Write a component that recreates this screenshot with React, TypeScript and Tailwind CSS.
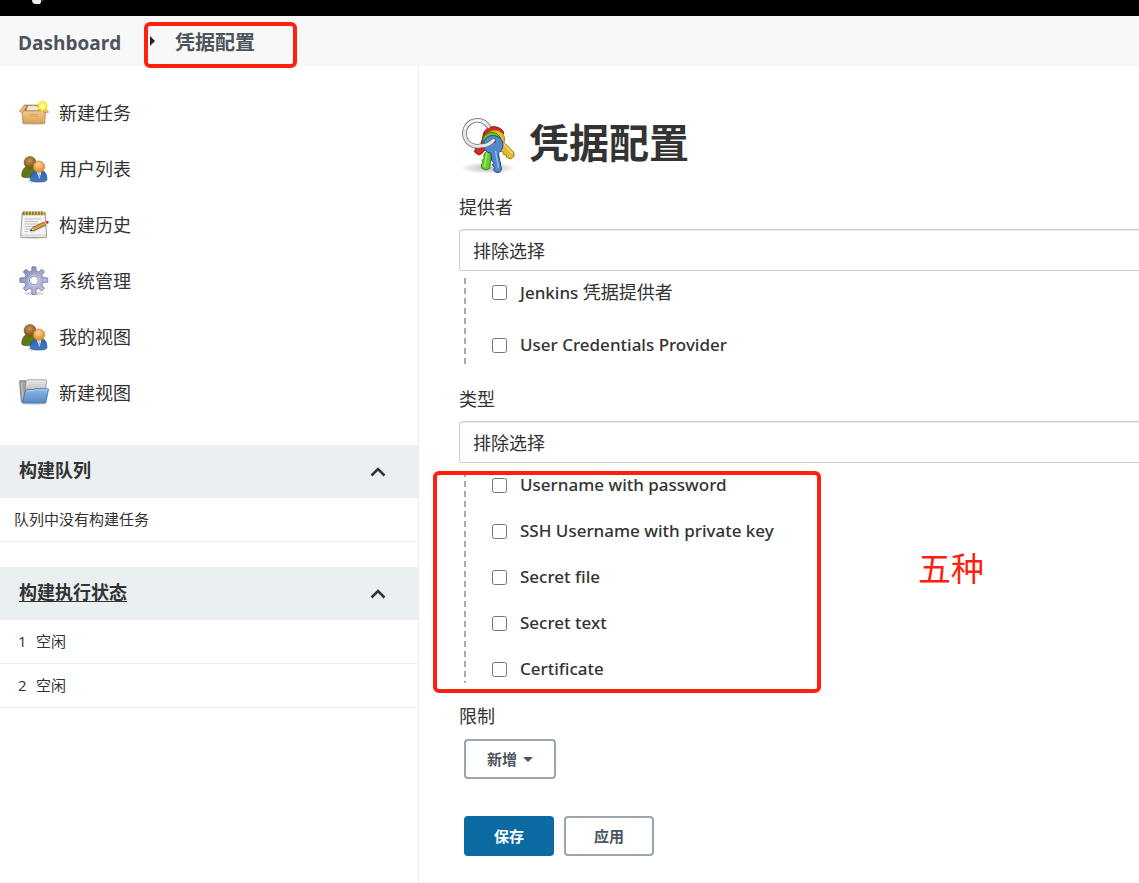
import type { ReactNode } from "react";

function BoxIcon() {
  return (
    <svg viewBox="0 0 30 30" className="size-[30px] shrink-0" aria-hidden="true">
      <defs>
        <linearGradient id="box-front" x1="0" y1="0" x2="0" y2="1">
          <stop offset="0" stopColor="#f0c78a" />
          <stop offset="1" stopColor="#d9a45c" />
        </linearGradient>
        <radialGradient id="box-star">
          <stop offset="0" stopColor="#fffde0" />
          <stop offset="0.4" stopColor="#fdf03c" />
          <stop offset="0.75" stopColor="#f7e31d" stopOpacity="0.8" />
          <stop offset="1" stopColor="#f7e31d" stopOpacity="0" />
        </radialGradient>
      </defs>
      <ellipse cx="14.8" cy="25.6" rx="12" ry="1.6" fill="#000" opacity="0.15" />
      <path d="M5.5 7H21l4.5 6.5H3z" fill="#a8793f" stroke="#b98545" strokeWidth="0.7" />
      <path d="M7.500 12.800l1-4.500q2-1.500 3.500-.3 2-1.400 4 0 2-.6 3 .6l1 4.200z" fill="#eceae6" stroke="#8f897f" strokeWidth="0.5" />
      <path d="M3 12.8h23.5l-.8 12.4H4z" fill="url(#box-front)" stroke="#b57f3c" strokeWidth="0.8" />
      <path d="M5.5 7L.4 13.2l3 1.6L8 8.4z" fill="#e9b974" stroke="#b98545" strokeWidth="0.7" />
      <path d="M22 8l3.3 7 4.3-.8L24.5 8z" fill="#e9b974" stroke="#b98545" strokeWidth="0.7" />
      <path d="M11 16.5h8M11 18.2h8" stroke="#c08d4a" strokeWidth="0.6" opacity="0.6" />
      <circle cx="23.3" cy="8" r="6" fill="url(#box-star)" />
      <path d="M23.3 3l1.2 3.2 3.6-.8-2 2.9 2.3 2.5-3.5-.1-1.4 3-1.3-3-3.6.4 2.3-2.7-2-2.8 3.3.6z" fill="#fff45a" />
      <circle cx="23.300" cy="8" r="1.800" fill="#fffef0" />
    </svg>
  );
}

function UsersIcon() {
  return (
    <svg viewBox="0 0 30 30" className="size-[30px] shrink-0" aria-hidden="true">
      <defs>
        <radialGradient id="head-back" cx="0.45" cy="0.35">
          <stop offset="0" stopColor="#c99a5a" />
          <stop offset="1" stopColor="#8a5d22" />
        </radialGradient>
        <radialGradient id="head-front" cx="0.45" cy="0.35">
          <stop offset="0" stopColor="#ffd79a" />
          <stop offset="1" stopColor="#e6973c" />
        </radialGradient>
        <linearGradient id="body-front" x1="0" y1="0" x2="0" y2="1">
          <stop offset="0" stopColor="#2b62ab" />
          <stop offset="1" stopColor="#3f7cc4" />
        </linearGradient>
      </defs>
      <ellipse cx="18" cy="27.3" rx="10" ry="1.6" fill="#000" opacity="0.15" />
      <path d="M2.700 21.500c0-5 2.500-8.600 6-9.200h5c3 .6 5 4 5 8l-2 3.200H5.500c-1.700 0-2.800-.7-2.800-2z" fill="#5d7a14" stroke="#3f540b" strokeWidth="0.6" />
      <circle cx="11" cy="8.400" r="5.900" fill="url(#head-back)" stroke="#73490f" strokeWidth="0.6" />
      <path d="M11.200 25.500c0-4.800 2.300-8.300 5.800-8.800h6c3.300.5 5 4 5 8.500 0 1.600-2 2.600-8.200 2.600s-8.600-.8-8.600-2.300z" fill="url(#body-front)" stroke="#1f4c8b" strokeWidth="0.6" />
      <path d="M17.600 17.500h4.800L20.500 25z" fill="#f4f6fa" />
      <path d="M19.500 18.500h1l.5 3.500-.7 2-.8-2z" fill="#9fb4d1" />
      <circle cx="20" cy="12.600" r="5.700" fill="url(#head-front)" stroke="#c47a22" strokeWidth="0.6" />
    </svg>
  );
}

function NotepadIcon() {
  return (
    <svg viewBox="0 0 30 30" className="size-[30px] shrink-0" aria-hidden="true">
      <ellipse cx="15" cy="27.400" rx="14" ry="1.500" fill="#000" opacity="0.15" />
      <path d="M3.200 3h23l1.300 23.300q0 1-1 1H2.700q-1 0-1-1z" fill="#f4f4f3" stroke="#8d8f8b" strokeWidth="0.9" />
      <path d="M2 25h25.500" stroke="#c4c5c2" strokeWidth="0.8" />
      <path d="M3.200 2h23.200l.2 3.200H3z" fill="#b4a24a" />
      <path d="M5 1v4M8 1v4M11 1v4M14 1v4M17 1v4M20 1v4M23 1v4" stroke="#6f6420" strokeWidth="1.100" />
      <path d="M6.200 1v4M9.200 1v4M12.200 1v4M15.200 1v4M18.200 1v4M21.200 1v4M24.200 1v4" stroke="#e0d483" strokeWidth="0.7" />
      <path d="M5.500 9H22M5.500 11.500H19M5.500 14H21M5.500 16.500H15M5.500 19H11M5.500 21.500H9" stroke="#b9bbb8" strokeWidth="0.9" />
      <path d="M12 22.300l15-7" stroke="#000" strokeWidth="1.600" opacity="0.150" />
      <path d="M11 20.800l3.300-3.700 11-5.100 1.500 3-11 5.100z" fill="#e2a03a" stroke="#70430c" strokeWidth="0.7" />
      <path d="M11 20.800l3.300-3.700 1.500 3z" fill="#f0d9ae" stroke="#70430c" strokeWidth="0.400" />
      <path d="M11 20.800l1.500-1.700.7 1.300z" fill="#222" />
      <path d="M25.300 12l1.500-.7 1.500 3-1.500.7z" fill="#c8cbd0" />
      <path d="M26.600 11.400l1.300-.6q1.200-.3 1.700.9.400 1.300-.4 1.700l-1.200.6z" fill="#d8282f" />
    </svg>
  );
}

function GearIcon() {
  return (
    <svg viewBox="0 0 30 30" className="size-[30px] shrink-0" aria-hidden="true">
      <defs>
        <linearGradient id="gear-fill" x1="0.1" y1="0" x2="0.9" y2="1">
          <stop offset="0" stopColor="#7388b2" />
          <stop offset="0.5" stopColor="#a9aed2" />
          <stop offset="1" stopColor="#c3bfdc" />
        </linearGradient>
      </defs>
      <ellipse cx="15" cy="27.500" rx="10" ry="1.800" fill="#000" opacity="0.15" />
      <path
        d="M12.700 4.900L13 .8h3.800l.4 4.100 2.400 1 3.200-2.700 2.700 2.700-2.700 3.200 1 2.400 4.900.5v4.200l-4.900.4-1 2.400 2.700 3.300-2.700 2.700-3.200-2.700-2.400 1-.4 5h-3.800l-.3-5-2.500-1L7 25l-2.700-2.700L7 19l-1-2.400-5.200-.4V12l5.200-.5 1-2.400-2.700-3.200L7 3.200l3.200 2.700zM15 10.100a4.400 4.400 0 1 0 0 8.800 4.400 4.400 0 0 0 0-8.800z"
        fill="url(#gear-fill)"
        fillRule="evenodd"
        stroke="#6d7596"
        strokeWidth="0.8"
        strokeLinejoin="round"
      />
      <circle cx="15" cy="14.500" r="5.500" fill="none" stroke="#dcdff0" strokeWidth="1" opacity="0.8" />
    </svg>
  );
}

function FolderIcon() {
  return (
    <svg viewBox="0 0 30 30" className="size-[30px] shrink-0" aria-hidden="true">
      <defs>
        <linearGradient id="folder-front" x1="0" y1="0" x2="0" y2="1">
          <stop offset="0" stopColor="#92bbe6" />
          <stop offset="1" stopColor="#5588c4" />
        </linearGradient>
        <linearGradient id="folder-paper" x1="0" y1="0" x2="0" y2="1">
          <stop offset="0" stopColor="#f2f2f2" />
          <stop offset="1" stopColor="#a9aaa8" />
        </linearGradient>
      </defs>
      <ellipse cx="15" cy="25.600" rx="13" ry="1.400" fill="#000" opacity="0.15" />
      <path d="M.6 3.500q0-.8.8-.8h5l1 2.300h18v19H3.400q-1 0-1.200-1z" fill="#a3a5a2" stroke="#6f716e" strokeWidth="0.8" />
      <path d="M2.500 5l1.800 17" stroke="#d0d1cf" strokeWidth="0.8" />
      <path d="M6.800 4.500l1.500-2.700h18.500q.8 0 .8.800L26 16H5.500z" fill="url(#folder-paper)" stroke="#7c7e7b" strokeWidth="0.7" />
      <path d="M10 4.500h14M9.500 6.500h14M9 8.500h10" stroke="#cfd0ce" strokeWidth="0.7" />
      <path d="M6.500 12.600q.3-.8 1.200-.9l7-.2 1-.8h13.200q.7 0 .6.800l-2.600 12.600q-.2.900-1.200.9H4.300q-1 0-.8-1z" fill="url(#folder-front)" stroke="#3b6ca8" strokeWidth="0.8" />
      <path d="M7.500 13l7.600-.4 1-.8h12.300" fill="none" stroke="#c4dbf4" strokeWidth="0.7" />
    </svg>
  );
}

function KeysIcon() {
  return (
    <svg viewBox="2 2 58 58" className="size-[58px] shrink-0" aria-hidden="true">
      <defs>
        <radialGradient id="keys-shadow">
          <stop offset="0" stopColor="#000" stopOpacity="0.28" />
          <stop offset="1" stopColor="#000" stopOpacity="0" />
        </radialGradient>
      </defs>
      <ellipse cx="31" cy="55" rx="28" ry="6" fill="url(#keys-shadow)" />
      {/* red */}
      <path d="M27 19c3-5 9-6.500 14-4.500 3 1.200 5 3 6 5.500L32 31l-7 9.500-3.300 1.500-4.200-3 1-3.500 2-.6.5-3 3-.8z" fill="#d92626" stroke="#8e1010" strokeWidth="1" />
      {/* yellow */}
      <path d="M30 21c4-4.500 10-5 14.500-1.500 3 2.800 3.500 6 2.500 10l9.500 9.500.8 4-3.500 3-4-1.500-.5-2.500-2.800-.4-.7-3-3-.6-3.800-4.200z" fill="#e3b935" stroke="#a17c0e" strokeWidth="1" />
      <path d="M45.500 30l10 10.500" stroke="#f6dc7c" strokeWidth="1.200" />
      {/* green */}
      <path d="M26 25c3-5 9-7 14-4l4 4-9 12-2.500 18.500-3.200 1.500-4.300-1.800-.8-3.500 1.800-2-.8-2.500 2-2-.4-3 2.600-4c-3-4-4-9-3.400-13.200z" fill="#69cf26" stroke="#348508" strokeWidth="1" />
      <path d="M30 39l-2.500 15" stroke="#b4f07e" strokeWidth="1.200" />
      {/* blue */}
      <path d="M27 28c2-4.500 7-6.500 12-5 6 2 8 7 6.500 11.500-.8 2.700-2.500 4.500-4.200 5.700l3.300 16.500-2.300 2.800-4-.4-1.800-2.300 1.200-2.500-2.200-2 1.200-2.600-2-2.200-.8-7.300c-5-.6-8.400-5.500-6.900-12.200z" fill="#5287cc" stroke="#1f4a87" strokeWidth="1" />
      <path d="M38.500 38l3 17" stroke="#9dc0ec" strokeWidth="1.300" />
      <circle cx="36.500" cy="27.500" r="2.600" fill="#29456e" />
      {/* ring */}
      <path d="M31.500 13.500A13 13 0 1 0 24 32.800q7 .5 12.500-5.500" fill="none" stroke="#6f716e" strokeWidth="4.600" strokeLinecap="round" />
      <path d="M31.500 13.500A13 13 0 1 0 24 32.800q7 .5 12.500-5.500" fill="none" stroke="#e6e6e6" strokeWidth="3" strokeLinecap="round" />
      <path d="M29 11.200A13 13 0 0 0 8 16" fill="none" stroke="#fff" strokeWidth="1.200" />
    </svg>
  );
}

function Chevron() {
  return (
    <svg viewBox="0 0 16 12" className="h-3 w-4" fill="none" stroke="#333" strokeWidth="2.6" aria-hidden="true">
      <path d="M1.500 9.500L8 3l6.500 6.500" />
    </svg>
  );
}

const tasks = [
  { label: "新建任务", icon: <BoxIcon /> },
  { label: "用户列表", icon: <UsersIcon /> },
  { label: "构建历史", icon: <NotepadIcon /> },
  { label: "系统管理", icon: <GearIcon /> },
  { label: "我的视图", icon: <UsersIcon /> },
  { label: "新建视图", icon: <FolderIcon /> },
];

const providers: { id: string; label: ReactNode }[] = [
  {
    id: "jenkins",
    label: (
      <span>
        Jenkins <span className="text-[18px] font-normal">凭据提供者</span>
      </span>
    ),
  },
  { id: "user", label: "User Credentials Provider" },
];

const types = [
  { id: "password", label: "Username with password" },
  { id: "ssh", label: "SSH Username with private key" },
  { id: "file", label: "Secret file" },
  { id: "text", label: "Secret text" },
  { id: "certificate", label: "Certificate" },
];

function PaneHeader({ children }: { children: ReactNode }) {
  return (
    <div className="flex h-[53px] items-center justify-between bg-[#eaeff2] pr-8 pl-[19px]">
      <h2 className="pb-1 text-[18px] leading-6 font-bold">{children}</h2>
      <button type="button" aria-label="collapse">
        <Chevron />
      </button>
    </div>
  );
}

function Sidebar() {
  return (
    <aside className="w-[419px] shrink-0 border-r border-[#eaeff2] pt-[19px]">
      <nav>
        {tasks.map((task) => (
          <a key={task.label} href="#" className="flex h-14 items-center gap-[10px] pl-[19px] text-[18px] leading-6">
            {task.icon}
            {task.label}
          </a>
        ))}
      </nav>

      <section className="mt-6">
        <PaneHeader>构建队列</PaneHeader>
        <p className="flex h-11 items-center border-b border-[#eaeff2] pl-[14px] text-[15px]">队列中没有构建任务</p>
      </section>

      <section className="mt-[25px]">
        <PaneHeader>
          <a href="#" className="underline underline-offset-2">
            构建执行状态
          </a>
        </PaneHeader>
        <table className="w-full border-separate border-spacing-0 text-[15px]">
          <tbody>
            {[1, 2].map((n) => (
              <tr key={n} className="h-11">
                <td className="w-9 border-b border-[#eaeff2] pl-[18px]">{n}</td>
                <td className="border-b border-[#eaeff2]">空闲</td>
              </tr>
            ))}
          </tbody>
        </table>
      </section>
    </aside>
  );
}

function FilterSelect({ id, label }: { id: string; label: string }) {
  return (
    <>
      <label htmlFor={id} className="block text-[18px] leading-6">
        {label}
      </label>
      <select
        id={id}
        className="mt-[10px] block h-[42px] w-full appearance-none rounded-l border border-r-0 border-[#ccc] bg-white pt-[2px] pl-[13px] text-[18px] shadow-[inset_0_1px_1px_rgba(0,0,0,0.075)]"
      >
        <option>排除选择</option>
      </select>
    </>
  );
}

function DashedLine() {
  return (
    <svg className="h-full w-[2px]" aria-hidden="true">
      <line x1="1" y1="0" x2="1" y2="100%" stroke="#a9a9a9" strokeWidth="2" strokeDasharray="6 4" />
    </svg>
  );
}

function Check({ label }: { label: ReactNode }) {
  return (
    <label className="flex h-6 w-fit items-center gap-[13px] font-['Noto_Sans','Noto_Sans_CJK_SC',sans-serif] text-[17px] leading-6 font-medium">
      <input type="checkbox" className="size-[15px]" />
      {label}
    </label>
  );
}

export default function App() {
  return (
    <div className="flex min-h-screen flex-col bg-white font-['Open_Sans','Noto_Sans_CJK_SC',sans-serif] text-[#333]">
      <header className="h-4 bg-black pl-8">
        <svg viewBox="0 0 12 5" className="h-[5px] w-3" aria-hidden="true">
          <path d="M0 0h9v2.500L7.500 4h-5L.5 2.500z" fill="#eee" />
          <path d="M9.500 0l1.500.5-1 1z" fill="#aaa" />
        </svg>
      </header>

      <nav className="relative flex h-[50px] items-center bg-[#f8f8f8] pl-[18px] text-[20px] leading-6 font-bold text-[#4d545d]">
        <a href="#" className="w-[132px] pt-[3px] text-[19px]">
          Dashboard
        </a>
        <svg viewBox="0 0 5 10" className="h-[10px] w-[5px]" aria-hidden="true">
          <path d="M0 0l5 5-5 5z" fill="#222" />
        </svg>
        <a href="#" className="pt-[3px] pl-5">
          凭据配置
        </a>
        {/* annotation */}
        <div className="pointer-events-none absolute top-[6px] left-[144px] h-[46px] w-[153px] rounded-md border-4 border-[#ff2010]" />
      </nav>

      <div className="flex flex-1">
        <Sidebar />

        <main className="min-w-0 flex-1 pt-[49px] pb-7 pl-10">
          <h1 className="flex h-[58px] items-center gap-3 text-[40px] leading-[58px] font-bold">
            <KeysIcon />
            <span className="pb-[3px]">凭据配置</span>
          </h1>

          <form>
            <div className="mt-[22px]">
              <FilterSelect id="provider" label="提供者" />
              <div className="mt-[7px] ml-[5px] flex h-[87px] gap-[26px]">
                <DashedLine />
                <div className="flex flex-col gap-[29px] pt-[2px]">
                  {providers.map((provider) => (
                    <Check key={provider.id} label={provider.label} />
                  ))}
                </div>
              </div>
            </div>

            <div className="mt-[22px]">
              <FilterSelect id="type" label="类型" />
              <div className="relative mt-2 ml-[5px] flex h-[212px] gap-[26px]">
                <DashedLine />
                <div className="flex flex-col gap-[22px] pt-[2px]">
                  {types.map((type) => (
                    <Check key={type.id} label={type.label} />
                  ))}
                </div>
                {/* annotation */}
                <div className="pointer-events-none absolute top-0 left-[-31px] h-[222px] w-[388px] rounded-md border-4 border-[#ff2010]" />
                <span className="absolute top-[74px] left-[454px] text-[33px] leading-[48px] text-[#ff2010]">五种</span>
              </div>
            </div>

            <div className="mt-[21px]">
              <p className="text-[18px] leading-6">限制</p>
              <button
                type="button"
                className="mt-[11px] ml-[5px] flex h-10 w-[92px] items-center justify-center gap-[6px] rounded border-2 border-[#9aa5ad] text-[15px] font-bold text-[#4d545d]"
              >
                新增
                <svg viewBox="0 0 10 5" className="h-[5px] w-[10px]" aria-hidden="true">
                  <path d="M0 0h10L5 5z" fill="#4d545d" />
                </svg>
              </button>
            </div>

            <div className="mt-[37px] ml-[5px] flex gap-[10px]">
              <button type="button" className="h-10 w-[90px] rounded bg-[#0b6aa2] text-[15px] font-bold text-white">
                保存
              </button>
              <button
                type="button"
                className="h-10 w-[90px] rounded border-2 border-[#9aa5ad] text-[15px] font-bold text-[#4d545d]"
              >
                应用
              </button>
            </div>
          </form>
        </main>
      </div>
    </div>
  );
}
